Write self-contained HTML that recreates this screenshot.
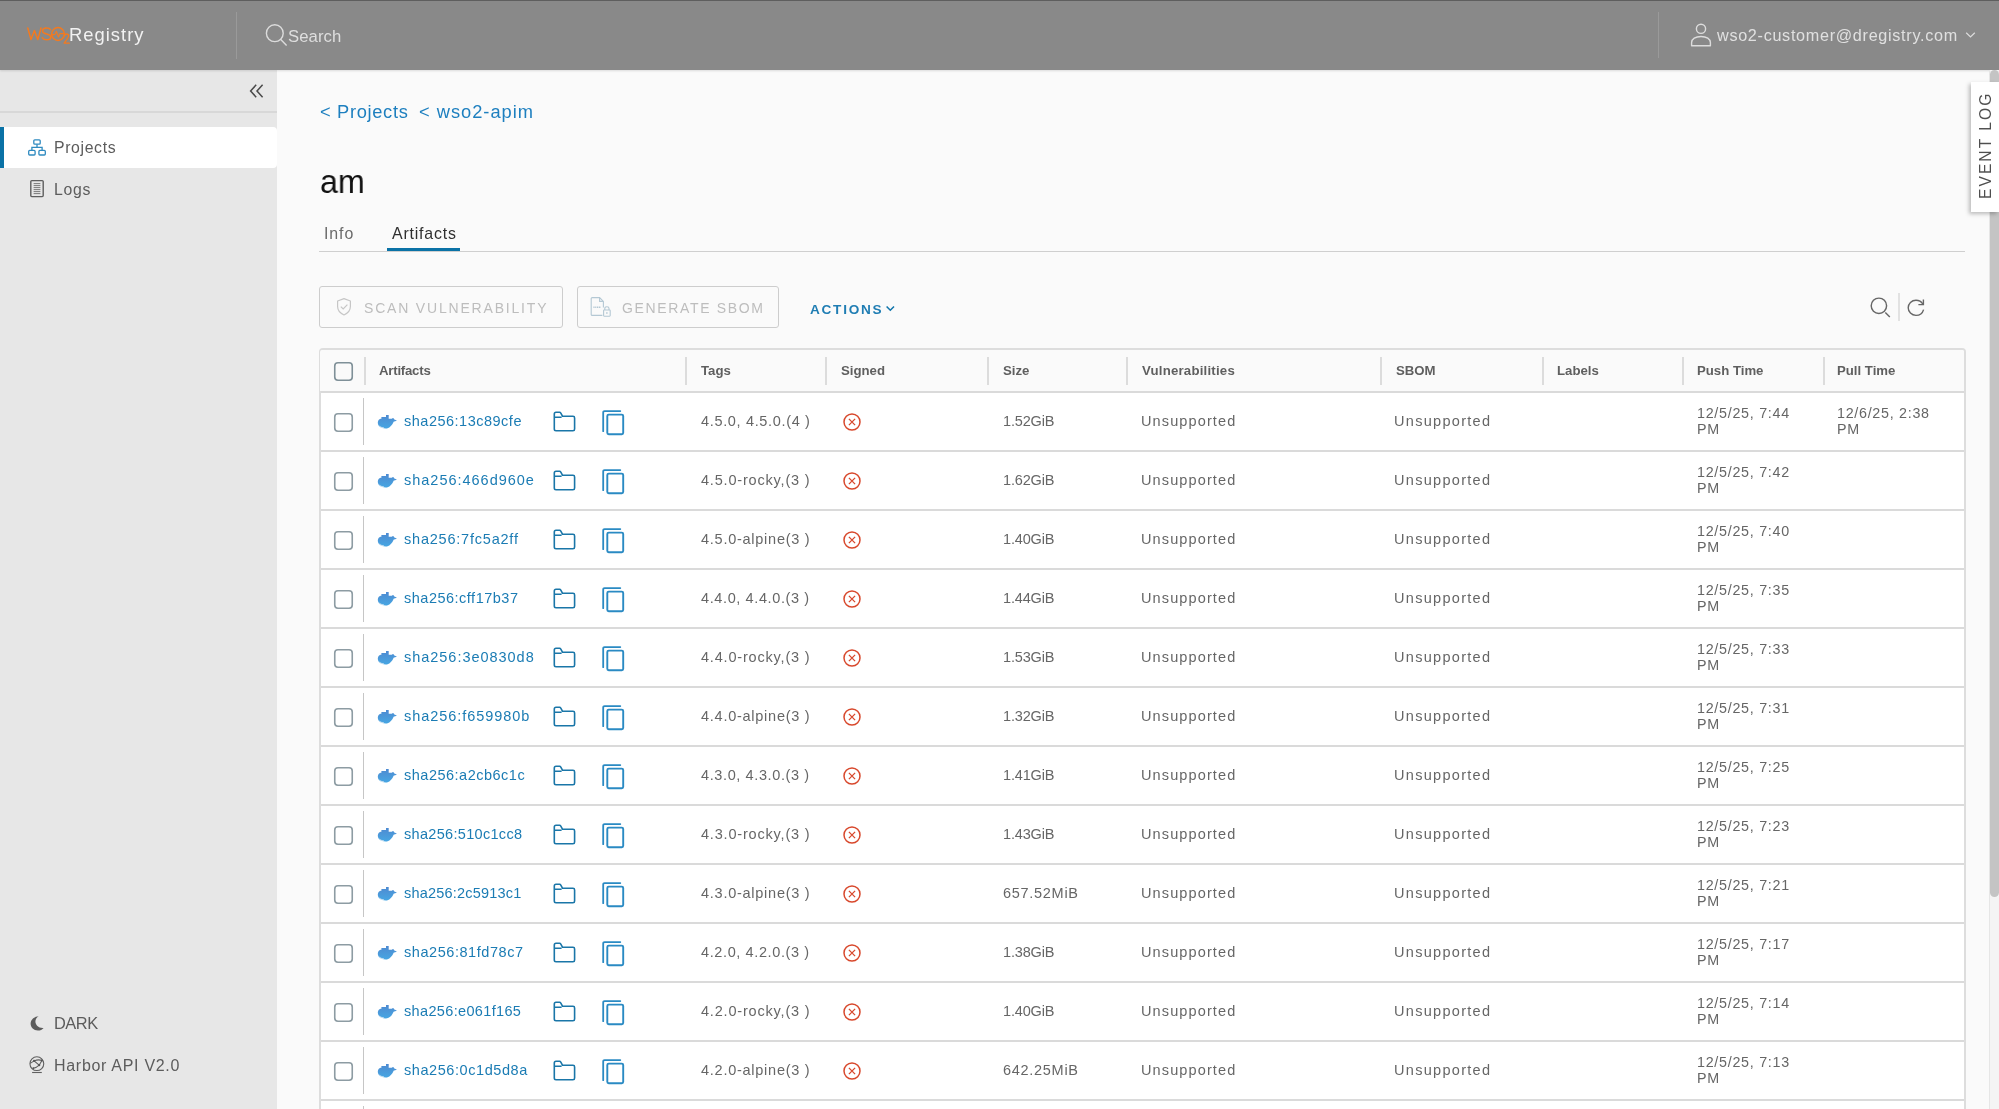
<!DOCTYPE html>
<html><head><meta charset="utf-8"><title>Harbor</title>
<style>
*{box-sizing:border-box;margin:0;padding:0}
html,body{width:1999px;height:1109px;overflow:hidden;background:#fafafa;font-family:"Liberation Sans",sans-serif;position:relative}
.abs{position:absolute}
.t,.tx{position:absolute;white-space:nowrap;line-height:1;will-change:transform}
#hdr{position:absolute;left:0;top:0;width:1999px;height:70px;background:#898989;border-top:1px solid #5e5e5e;box-shadow:0 1px 2px rgba(0,0,0,0.12)}
#side{position:absolute;left:0;top:70px;width:277px;height:1039px;background:#e7e7e7}
.hdiv{position:absolute;width:1px;background:#9a9a9a}
#sep1{position:absolute;left:0;top:111px;width:277px;height:2px;background:#d8d8d8}
#act{position:absolute;left:0;top:127px;width:277px;height:41px;background:#fff;border-radius:0 4px 4px 0}
#actbar{position:absolute;left:0;top:127px;width:4px;height:41px;background:#0a72a6}
.side-t{font-size:16px;color:#5c5c5c;left:53px}
.crumb{font-size:18px;color:#1d7fbf}
#title{font-size:34px;color:#111;left:319px}
.tab{font-size:16px}
#tabline{position:absolute;left:319px;top:251px;width:1646px;height:1px;background:#cfcfcf}
#tabul{position:absolute;left:387px;top:248px;width:73px;height:3px;background:#0a72a6}
.btn{position:absolute;top:286px;height:42px;border:1px solid #cdcdcd;border-radius:3px}
.btn-t{font-size:14px;color:#bdbdbd;letter-spacing:2.1px}
#actions{}
#tbl{position:absolute;left:319px;top:348px;width:1647px;height:800px;border:2px solid #dddddd;border-radius:4px;background:#fff}
#thead{position:absolute;left:320px;top:350px;width:1644px;height:41px;background:#fafafa;border-radius:2px 2px 0 0}
.hsep{position:absolute;top:357px;width:2px;height:28px;background:#dcdcdc}
.th{font-size:13px;font-weight:bold;color:#595959;top:364px}
.row{position:absolute;left:321px;width:1643px;height:59px;border-top:2px solid #dadada}
.row .cb{position:absolute;left:12px;top:19px}
.row .vsep{position:absolute;left:42px;top:5px;width:1px;height:47px;background:#c6c6c6}
.row .dk{position:absolute;left:56px;top:20px}
.row .fd{position:absolute;left:230px;top:17px}
.row .cp{position:absolute;left:279.5px;top:16px}
.row .xc{position:absolute;left:521px;top:19px}
.row .t{font-size:14px;color:#666;top:22px}
.row .lnk{color:#1b7cb4}
.row .t2{position:absolute;white-space:nowrap;font-size:14px;line-height:16px;color:#666;top:13px}
.c-art{left:83px}
.c-tag{left:380px}
.c-size{left:682px}
.c-vul{left:821px}
.c-sbom{left:1074px}
.c-push{left:1377px}
.c-pull{left:1517px}
#sb{position:absolute;left:1989px;top:70px;width:10px;height:1039px;background:#f4f4f4;border-left:1px solid #e6e6e6}
#thumb{position:absolute;left:1990px;top:70px;width:9px;height:827px;background:#c4c4c4;border-radius:5px}
#evt{position:absolute;left:1971px;top:82px;width:28px;height:130px;background:#fff;box-shadow:-2px 2px 4px rgba(0,0,0,.25)}
#evt-t{will-change:transform;position:absolute;left:1977.5px;top:199px;transform-origin:0 0;transform:rotate(-90deg);font-size:15.6px;letter-spacing:2.05px;color:#4f4f4f;line-height:1;white-space:nowrap}

</style></head>
<body>
<div id="side"></div>
<div id="hdr"></div>
<!-- logo -->
<svg class="abs" style="left:26px;top:25px" width="46" height="21" viewBox="0 0 46 21"><g stroke="#f47a1f" stroke-width="1.5" fill="none" stroke-linejoin="round" stroke-linecap="round"><path d="M1.8 3 L5 14.6 L8.4 5.5 L11.8 14.6 L15 3"/><path d="M24.5 4.6 C23.5 3.2 21.8 2.8 20.3 2.9 C18.2 3 16.6 4.2 16.6 6 C16.6 10 24.8 8.2 24.8 12 C24.8 13.8 23 14.8 20.8 14.8 C18.9 14.8 17.2 14 16.2 12.6"/><circle cx="32" cy="9" r="6.4"/><path d="M26.2 9.6 H29 L30.4 6.2 L32.4 12 L33.9 8.6 H37.6" stroke-width="1.1"/><path d="M38.3 11.2 C38.5 9.8 39.4 9 40.6 9 C41.8 9 42.7 9.8 42.7 11 C42.7 12.8 40 15 38.1 18.2 H43.3" stroke-width="1.3"/></g></svg>
<div class="hdiv" style="left:236px;top:12px;height:47px"></div>
<svg class="abs" style="left:264px;top:23px" width="25" height="25" viewBox="0 0 25 25"><circle cx="10.8" cy="10.2" r="8.4" stroke="#dcdcdc" stroke-width="1.4" fill="none"/><path d="M16.8 16.6 L22.6 22.4" stroke="#dcdcdc" stroke-width="1.4"/></svg>
<div class="hdiv" style="left:1658px;top:12px;height:46px"></div>
<svg class="abs" style="left:1690px;top:23px" width="23" height="25" viewBox="0 0 23 25"><circle cx="11" cy="5.8" r="4.6" stroke="#dcdcdc" stroke-width="1.4" fill="none"/><path d="M1.6 22.8 V19.6 C1.6 16 5.5 13.5 11 13.5 C16.5 13.5 20.4 16 20.4 19.6 V22.8 Z" stroke="#dcdcdc" stroke-width="1.4" fill="none" stroke-linejoin="round"/></svg>
<svg class="abs" style="left:1965px;top:31px" width="11" height="8" viewBox="0 0 11 8"><path d="M1.2 1.8 L5.5 6 L9.8 1.8" stroke="#dcdcdc" stroke-width="1.2" fill="none"/></svg>

<!-- sidebar -->
<svg class="abs" style="left:248px;top:82px" width="18" height="18" viewBox="0 0 18 18"><path d="M8.2 2.8 L2.6 9 L8.2 15.2 M14.6 2.8 L9 9 L14.6 15.2" stroke="#4a4a4a" stroke-width="1.5" fill="none"/></svg>
<div id="sep1"></div>
<div id="act"></div><div id="actbar"></div>
<svg class="abs" style="left:27px;top:138px" width="20" height="19" viewBox="0 0 20 19"><rect x="6.8" y="1.8" width="6.4" height="4.4" rx="1" stroke="#2e8ac0" stroke-width="1.3" fill="none"/><rect x="1.7" y="12.4" width="6.4" height="4.6" rx="1" stroke="#2e8ac0" stroke-width="1.3" fill="none"/><rect x="11.9" y="12.4" width="6.4" height="4.6" rx="1" stroke="#2e8ac0" stroke-width="1.3" fill="none"/><path d="M10 6.2 V9.4 M4.9 12.4 V9.4 H15.1 V12.4" stroke="#2e8ac0" stroke-width="1.3" fill="none"/></svg>
<svg class="abs" style="left:29px;top:179px" width="16" height="19" viewBox="0 0 16 19"><rect x="1.8" y="1.6" width="12.4" height="16" rx="1" stroke="#5e5e5e" stroke-width="1.4" fill="none"/><path d="M4.6 4.6 H11.4 M4.6 6.6 H11.4 M4.6 8.6 H11.4 M4.6 10.6 H11.4 M4.6 12.6 H11.4 M4.6 14.6 H11.4" stroke="#7a7a7a" stroke-width="1"/></svg>
<svg class="abs" style="left:29px;top:1015px" width="16" height="17" viewBox="0 0 16 17"><path d="M9.6 1.2 C5.2 1.6 1.6 4.6 1.6 8.6 C1.6 12.6 4.8 15.6 8.8 15.6 C11.2 15.6 13.4 14.6 14.6 13 C9.6 13.4 6.4 10 6.4 6.6 C6.4 4.4 7.6 2.4 9.6 1.2 Z" fill="#5c5c5c"/></svg>
<svg class="abs" style="left:28px;top:1055px" width="18" height="20" viewBox="0 0 18 20"><g stroke="#606060" stroke-width="1.1" fill="none"><circle cx="8.85" cy="8.65" r="6.9"/><path d="M2.2 8.4 L6.1 5.9 Q10 4.2 13.9 5.4 M6.1 5.9 L11.2 10.2 L13.9 5.4 M11.2 10.2 Q8.5 12.8 5.3 13.2"/><path d="M4.1 17.5 H13.8"/></g><g fill="#555"><circle cx="6.1" cy="5.9" r="1.1"/><circle cx="11.2" cy="10.2" r="1.1"/><circle cx="13.9" cy="5.4" r="1"/><circle cx="5.3" cy="13.2" r="1"/></g></svg>

<!-- main -->
<div id="tabline"></div><div id="tabul"></div>

<div class="btn" style="left:319px;width:244px"></div>
<svg class="abs" style="left:335px;top:297px" width="18" height="20" viewBox="0 0 18 20"><path d="M9 1.6 L15.4 4 V9.6 C15.4 13.4 12.6 16.4 9 18 C5.4 16.4 2.6 13.4 2.6 9.6 V4 Z" stroke="#c6c6c6" stroke-width="1.2" fill="none" stroke-linejoin="round"/><path d="M5.8 9.6 L8.2 12 L12.4 7.6" stroke="#c6c6c6" stroke-width="1.2" fill="none"/></svg>
<div class="btn" style="left:577px;width:202px"></div>
<svg class="abs" style="left:589px;top:296px" width="23" height="22" viewBox="0 0 23 22"><path d="M13.4 19.4 H3.2 Q2.2 19.4 2.2 18.4 V2.6 Q2.2 1.6 3.2 1.6 H10.6 L14.4 5.4 V11.4 M10.6 1.6 V5.4 H14.4" stroke="#b4c8d4" stroke-width="1.1" fill="none"/><path d="M4.4 11.2 H12" stroke="#b4c8d4" stroke-width="1.6" stroke-dasharray="1.2 0.6"/><rect x="14.6" y="14" width="6.6" height="6.2" rx="0.6" stroke="#b4c8d4" stroke-width="1.1" fill="none"/><path d="M15.8 14 V12.4 C15.8 10.2 20 10.2 20 12.4 V14 M17.9 16 V18" stroke="#b4c8d4" stroke-width="1.1" fill="none"/></svg>
<svg class="abs" style="left:885px;top:304px" width="11" height="9" viewBox="0 0 11 9"><path d="M1.6 2.4 L5.3 6.2 L9 2.4" stroke="#0f74aa" stroke-width="1.5" fill="none"/></svg>

<svg class="abs" style="left:1866px;top:294px" width="28" height="28" viewBox="0 0 28 28"><circle cx="12.9" cy="11.8" r="7.7" stroke="#666" stroke-width="1.45" fill="none"/><path d="M19.3 18.6 L23.8 23.1" stroke="#666" stroke-width="1.45"/></svg>
<div class="abs" style="left:1898px;top:293px;width:2px;height:28px;background:#e2e2e2"></div>
<svg class="abs" style="left:1904px;top:296px" width="24" height="24" viewBox="0 0 24 24"><path d="M19.6 13.6 C18.6 17 15.6 19.4 12 19.4 C7.6 19.4 4.2 15.8 4.2 11.8 C4.2 7.6 7.6 4.2 12 4.2 C15 4.2 17.4 5.6 18.8 8" stroke="#666" stroke-width="1.4" fill="none"/><path d="M19.4 3.6 V8.6 H14.4" stroke="#666" stroke-width="1.4" fill="none"/></svg>

<div id="tbl"></div>
<div id="thead"></div>
<svg class="abs" style="left:333px;top:361px" width="21" height="21" viewBox="0 0 21 21"><rect x="1.75" y="1.75" width="17.5" height="17.5" rx="3.2" stroke="#7f9098" stroke-width="1.6" fill="#fafafa"/></svg>
<div class="hsep" style="left:364px"></div>
<div class="hsep" style="left:685px"></div>
<div class="hsep" style="left:825px"></div>
<div class="hsep" style="left:987px"></div>
<div class="hsep" style="left:1126px"></div>
<div class="hsep" style="left:1380px"></div>
<div class="hsep" style="left:1542px"></div>
<div class="hsep" style="left:1682px"></div>
<div class="hsep" style="left:1823px"></div>
<div class="row" style="top:391.00px"><svg class="cb" width="21" height="21" viewBox="0 0 21 21"><rect x="1.75" y="1.75" width="17.5" height="17.5" rx="3.2" stroke="#8d9ca3" stroke-width="1.6" fill="#fff"/></svg><div class="vsep"></div><svg class="dk" width="21" height="17" viewBox="0 0 21 17"><defs><linearGradient id="dg" x1="0" y1="0" x2="0" y2="1"><stop offset="0" stop-color="#4d8ad2"/><stop offset="0.5" stop-color="#4b98d9"/><stop offset="1" stop-color="#46a6e3"/></linearGradient></defs><path d="M0.8 9.6 C0.9 7.6 2 6.2 3.6 5.8 H4.4 V3.9 H9 V2 H11.7 V5.8 H14.8 C15.2 5.2 15.6 5 16.1 5 C16.7 5.2 17.1 6 17.3 6.5 L19.9 7.5 C18.7 8.2 17.4 8.5 16.6 8.7 C15 12.6 12.2 15.5 8.7 15.5 C3.8 15.5 0.8 13.2 0.8 9.6 Z" fill="url(#dg)"/><path d="M2.6 13.2 C3.6 14.3 5 14.7 6.6 14.6" stroke="#e6eef6" stroke-width="1" fill="none"/></svg><svg class="fd" width="26" height="24" viewBox="0 0 26 24"><path d="M3.3 4 Q3.3 2.3 5 2.3 H8.6 Q9.3 2.3 9.8 3.1 L11.6 6.3 H22 Q23.6 6.3 23.6 7.9 V19 Q23.6 20.7 22 20.7 H5 Q3.3 20.7 3.3 19 Z M3.3 7.3 H10.6" stroke="#1a76a8" stroke-width="1.6" fill="none" stroke-linejoin="round"/></svg><svg class="cp" width="24" height="27" viewBox="0 0 24 27"><path d="M2.2 22.2 V3.6 Q2.2 2.1 3.6 2.1 H19.3" stroke="#2a8ac3" stroke-width="1.8" fill="none" stroke-linecap="round"/><rect x="6.3" y="5.6" width="15.9" height="19.6" rx="1.4" stroke="#2a8ac3" stroke-width="1.9" fill="none"/></svg><svg class="xc" width="20" height="20" viewBox="0 0 20 20"><circle cx="10" cy="10" r="8" stroke="#d8482c" stroke-width="1.5" fill="none"/><path d="M6.9 6.9 L13.1 13.1 M13.1 6.9 L6.9 13.1" stroke="#d8482c" stroke-width="1.3"/></svg></div>
<div class="t" id="r_art" style="left:403.50px;top:414.18px;font-size:14.5px;font-weight:400;color:#1b7cb4;letter-spacing:0.500px">sha256:13c89cfe</div>
<div class="t" id="r_tag" style="left:701.30px;top:414.18px;font-size:14.5px;font-weight:400;color:#666666;letter-spacing:0.662px">4.5.0, 4.5.0.(4 )</div>
<div class="t" id="r_size" style="left:1003.10px;top:414.18px;font-size:14.5px;font-weight:400;color:#666666;letter-spacing:-0.167px">1.52GiB</div>
<div class="t" id="r_vul" style="left:1140.70px;top:414.18px;font-size:14.5px;font-weight:400;color:#666666;letter-spacing:1.120px">Unsupported</div>
<div class="t" id="r_sbom" style="left:1393.50px;top:414.18px;font-size:14.5px;font-weight:400;color:#666666;letter-spacing:1.300px">Unsupported</div>
<div class="t" id="r_push" style="left:1696.90px;top:405.75px;font-size:14.3px;color:#666666;letter-spacing:0.725px;line-height:15.6px">12/5/25, 7:44<br>PM</div>
<div class="t" id="r_pull" style="left:1837.30px;top:405.75px;font-size:14.3px;color:#666666;letter-spacing:0.713px;line-height:15.6px">12/6/25, 2:38<br>PM</div>
<div class="row" style="top:450.00px"><svg class="cb" width="21" height="21" viewBox="0 0 21 21"><rect x="1.75" y="1.75" width="17.5" height="17.5" rx="3.2" stroke="#8d9ca3" stroke-width="1.6" fill="#fff"/></svg><div class="vsep"></div><svg class="dk" width="21" height="17" viewBox="0 0 21 17"><defs><linearGradient id="dg" x1="0" y1="0" x2="0" y2="1"><stop offset="0" stop-color="#4d8ad2"/><stop offset="0.5" stop-color="#4b98d9"/><stop offset="1" stop-color="#46a6e3"/></linearGradient></defs><path d="M0.8 9.6 C0.9 7.6 2 6.2 3.6 5.8 H4.4 V3.9 H9 V2 H11.7 V5.8 H14.8 C15.2 5.2 15.6 5 16.1 5 C16.7 5.2 17.1 6 17.3 6.5 L19.9 7.5 C18.7 8.2 17.4 8.5 16.6 8.7 C15 12.6 12.2 15.5 8.7 15.5 C3.8 15.5 0.8 13.2 0.8 9.6 Z" fill="url(#dg)"/><path d="M2.6 13.2 C3.6 14.3 5 14.7 6.6 14.6" stroke="#e6eef6" stroke-width="1" fill="none"/></svg><svg class="fd" width="26" height="24" viewBox="0 0 26 24"><path d="M3.3 4 Q3.3 2.3 5 2.3 H8.6 Q9.3 2.3 9.8 3.1 L11.6 6.3 H22 Q23.6 6.3 23.6 7.9 V19 Q23.6 20.7 22 20.7 H5 Q3.3 20.7 3.3 19 Z M3.3 7.3 H10.6" stroke="#1a76a8" stroke-width="1.6" fill="none" stroke-linejoin="round"/></svg><svg class="cp" width="24" height="27" viewBox="0 0 24 27"><path d="M2.2 22.2 V3.6 Q2.2 2.1 3.6 2.1 H19.3" stroke="#2a8ac3" stroke-width="1.8" fill="none" stroke-linecap="round"/><rect x="6.3" y="5.6" width="15.9" height="19.6" rx="1.4" stroke="#2a8ac3" stroke-width="1.9" fill="none"/></svg><svg class="xc" width="20" height="20" viewBox="0 0 20 20"><circle cx="10" cy="10" r="8" stroke="#d8482c" stroke-width="1.5" fill="none"/><path d="M6.9 6.9 L13.1 13.1 M13.1 6.9 L6.9 13.1" stroke="#d8482c" stroke-width="1.3"/></svg></div>
<div class="t" id="r_art_1" style="left:403.50px;top:473.18px;font-size:14.5px;font-weight:400;color:#1b7cb4;letter-spacing:0.986px">sha256:466d960e</div>
<div class="t" id="r_tag_1" style="left:701.30px;top:473.18px;font-size:14.5px;font-weight:400;color:#666666;letter-spacing:0.809px">4.5.0-rocky,(3 )</div>
<div class="t" id="r_size_1" style="left:1003.10px;top:473.18px;font-size:14.5px;font-weight:400;color:#666666;letter-spacing:-0.167px">1.62GiB</div>
<div class="t" id="r_vul_1" style="left:1140.70px;top:473.18px;font-size:14.5px;font-weight:400;color:#666666;letter-spacing:1.120px">Unsupported</div>
<div class="t" id="r_sbom_1" style="left:1393.50px;top:473.18px;font-size:14.5px;font-weight:400;color:#666666;letter-spacing:1.300px">Unsupported</div>
<div class="t" id="r_push_1" style="left:1696.90px;top:464.75px;font-size:14.3px;color:#666666;letter-spacing:0.725px;line-height:15.6px">12/5/25, 7:42<br>PM</div>
<div class="row" style="top:509.00px"><svg class="cb" width="21" height="21" viewBox="0 0 21 21"><rect x="1.75" y="1.75" width="17.5" height="17.5" rx="3.2" stroke="#8d9ca3" stroke-width="1.6" fill="#fff"/></svg><div class="vsep"></div><svg class="dk" width="21" height="17" viewBox="0 0 21 17"><defs><linearGradient id="dg" x1="0" y1="0" x2="0" y2="1"><stop offset="0" stop-color="#4d8ad2"/><stop offset="0.5" stop-color="#4b98d9"/><stop offset="1" stop-color="#46a6e3"/></linearGradient></defs><path d="M0.8 9.6 C0.9 7.6 2 6.2 3.6 5.8 H4.4 V3.9 H9 V2 H11.7 V5.8 H14.8 C15.2 5.2 15.6 5 16.1 5 C16.7 5.2 17.1 6 17.3 6.5 L19.9 7.5 C18.7 8.2 17.4 8.5 16.6 8.7 C15 12.6 12.2 15.5 8.7 15.5 C3.8 15.5 0.8 13.2 0.8 9.6 Z" fill="url(#dg)"/><path d="M2.6 13.2 C3.6 14.3 5 14.7 6.6 14.6" stroke="#e6eef6" stroke-width="1" fill="none"/></svg><svg class="fd" width="26" height="24" viewBox="0 0 26 24"><path d="M3.3 4 Q3.3 2.3 5 2.3 H8.6 Q9.3 2.3 9.8 3.1 L11.6 6.3 H22 Q23.6 6.3 23.6 7.9 V19 Q23.6 20.7 22 20.7 H5 Q3.3 20.7 3.3 19 Z M3.3 7.3 H10.6" stroke="#1a76a8" stroke-width="1.6" fill="none" stroke-linejoin="round"/></svg><svg class="cp" width="24" height="27" viewBox="0 0 24 27"><path d="M2.2 22.2 V3.6 Q2.2 2.1 3.6 2.1 H19.3" stroke="#2a8ac3" stroke-width="1.8" fill="none" stroke-linecap="round"/><rect x="6.3" y="5.6" width="15.9" height="19.6" rx="1.4" stroke="#2a8ac3" stroke-width="1.9" fill="none"/></svg><svg class="xc" width="20" height="20" viewBox="0 0 20 20"><circle cx="10" cy="10" r="8" stroke="#d8482c" stroke-width="1.5" fill="none"/><path d="M6.9 6.9 L13.1 13.1 M13.1 6.9 L6.9 13.1" stroke="#d8482c" stroke-width="1.3"/></svg></div>
<div class="t" id="r_art_2" style="left:403.50px;top:532.17px;font-size:14.5px;font-weight:400;color:#1b7cb4;letter-spacing:0.786px">sha256:7fc5a2ff</div>
<div class="t" id="r_tag_2" style="left:701.30px;top:532.17px;font-size:14.5px;font-weight:400;color:#666666;letter-spacing:0.742px">4.5.0-alpine(3 )</div>
<div class="t" id="r_size_2" style="left:1003.10px;top:532.17px;font-size:14.5px;font-weight:400;color:#666666;letter-spacing:-0.167px">1.40GiB</div>
<div class="t" id="r_vul_2" style="left:1140.70px;top:532.17px;font-size:14.5px;font-weight:400;color:#666666;letter-spacing:1.120px">Unsupported</div>
<div class="t" id="r_sbom_2" style="left:1393.50px;top:532.17px;font-size:14.5px;font-weight:400;color:#666666;letter-spacing:1.300px">Unsupported</div>
<div class="t" id="r_push_2" style="left:1696.90px;top:523.75px;font-size:14.3px;color:#666666;letter-spacing:0.725px;line-height:15.6px">12/5/25, 7:40<br>PM</div>
<div class="row" style="top:568.00px"><svg class="cb" width="21" height="21" viewBox="0 0 21 21"><rect x="1.75" y="1.75" width="17.5" height="17.5" rx="3.2" stroke="#8d9ca3" stroke-width="1.6" fill="#fff"/></svg><div class="vsep"></div><svg class="dk" width="21" height="17" viewBox="0 0 21 17"><defs><linearGradient id="dg" x1="0" y1="0" x2="0" y2="1"><stop offset="0" stop-color="#4d8ad2"/><stop offset="0.5" stop-color="#4b98d9"/><stop offset="1" stop-color="#46a6e3"/></linearGradient></defs><path d="M0.8 9.6 C0.9 7.6 2 6.2 3.6 5.8 H4.4 V3.9 H9 V2 H11.7 V5.8 H14.8 C15.2 5.2 15.6 5 16.1 5 C16.7 5.2 17.1 6 17.3 6.5 L19.9 7.5 C18.7 8.2 17.4 8.5 16.6 8.7 C15 12.6 12.2 15.5 8.7 15.5 C3.8 15.5 0.8 13.2 0.8 9.6 Z" fill="url(#dg)"/><path d="M2.6 13.2 C3.6 14.3 5 14.7 6.6 14.6" stroke="#e6eef6" stroke-width="1" fill="none"/></svg><svg class="fd" width="26" height="24" viewBox="0 0 26 24"><path d="M3.3 4 Q3.3 2.3 5 2.3 H8.6 Q9.3 2.3 9.8 3.1 L11.6 6.3 H22 Q23.6 6.3 23.6 7.9 V19 Q23.6 20.7 22 20.7 H5 Q3.3 20.7 3.3 19 Z M3.3 7.3 H10.6" stroke="#1a76a8" stroke-width="1.6" fill="none" stroke-linejoin="round"/></svg><svg class="cp" width="24" height="27" viewBox="0 0 24 27"><path d="M2.2 22.2 V3.6 Q2.2 2.1 3.6 2.1 H19.3" stroke="#2a8ac3" stroke-width="1.8" fill="none" stroke-linecap="round"/><rect x="6.3" y="5.6" width="15.9" height="19.6" rx="1.4" stroke="#2a8ac3" stroke-width="1.9" fill="none"/></svg><svg class="xc" width="20" height="20" viewBox="0 0 20 20"><circle cx="10" cy="10" r="8" stroke="#d8482c" stroke-width="1.5" fill="none"/><path d="M6.9 6.9 L13.1 13.1 M13.1 6.9 L6.9 13.1" stroke="#d8482c" stroke-width="1.3"/></svg></div>
<div class="t" id="r_art_3" style="left:403.50px;top:591.17px;font-size:14.5px;font-weight:400;color:#1b7cb4;letter-spacing:0.500px">sha256:cff17b37</div>
<div class="t" id="r_tag_3" style="left:701.30px;top:591.17px;font-size:14.5px;font-weight:400;color:#666666;letter-spacing:0.612px">4.4.0, 4.4.0.(3 )</div>
<div class="t" id="r_size_3" style="left:1003.10px;top:591.17px;font-size:14.5px;font-weight:400;color:#666666;letter-spacing:-0.167px">1.44GiB</div>
<div class="t" id="r_vul_3" style="left:1140.70px;top:591.17px;font-size:14.5px;font-weight:400;color:#666666;letter-spacing:1.120px">Unsupported</div>
<div class="t" id="r_sbom_3" style="left:1393.50px;top:591.17px;font-size:14.5px;font-weight:400;color:#666666;letter-spacing:1.300px">Unsupported</div>
<div class="t" id="r_push_3" style="left:1696.90px;top:582.75px;font-size:14.3px;color:#666666;letter-spacing:0.725px;line-height:15.6px">12/5/25, 7:35<br>PM</div>
<div class="row" style="top:627.00px"><svg class="cb" width="21" height="21" viewBox="0 0 21 21"><rect x="1.75" y="1.75" width="17.5" height="17.5" rx="3.2" stroke="#8d9ca3" stroke-width="1.6" fill="#fff"/></svg><div class="vsep"></div><svg class="dk" width="21" height="17" viewBox="0 0 21 17"><defs><linearGradient id="dg" x1="0" y1="0" x2="0" y2="1"><stop offset="0" stop-color="#4d8ad2"/><stop offset="0.5" stop-color="#4b98d9"/><stop offset="1" stop-color="#46a6e3"/></linearGradient></defs><path d="M0.8 9.6 C0.9 7.6 2 6.2 3.6 5.8 H4.4 V3.9 H9 V2 H11.7 V5.8 H14.8 C15.2 5.2 15.6 5 16.1 5 C16.7 5.2 17.1 6 17.3 6.5 L19.9 7.5 C18.7 8.2 17.4 8.5 16.6 8.7 C15 12.6 12.2 15.5 8.7 15.5 C3.8 15.5 0.8 13.2 0.8 9.6 Z" fill="url(#dg)"/><path d="M2.6 13.2 C3.6 14.3 5 14.7 6.6 14.6" stroke="#e6eef6" stroke-width="1" fill="none"/></svg><svg class="fd" width="26" height="24" viewBox="0 0 26 24"><path d="M3.3 4 Q3.3 2.3 5 2.3 H8.6 Q9.3 2.3 9.8 3.1 L11.6 6.3 H22 Q23.6 6.3 23.6 7.9 V19 Q23.6 20.7 22 20.7 H5 Q3.3 20.7 3.3 19 Z M3.3 7.3 H10.6" stroke="#1a76a8" stroke-width="1.6" fill="none" stroke-linejoin="round"/></svg><svg class="cp" width="24" height="27" viewBox="0 0 24 27"><path d="M2.2 22.2 V3.6 Q2.2 2.1 3.6 2.1 H19.3" stroke="#2a8ac3" stroke-width="1.8" fill="none" stroke-linecap="round"/><rect x="6.3" y="5.6" width="15.9" height="19.6" rx="1.4" stroke="#2a8ac3" stroke-width="1.9" fill="none"/></svg><svg class="xc" width="20" height="20" viewBox="0 0 20 20"><circle cx="10" cy="10" r="8" stroke="#d8482c" stroke-width="1.5" fill="none"/><path d="M6.9 6.9 L13.1 13.1 M13.1 6.9 L6.9 13.1" stroke="#d8482c" stroke-width="1.3"/></svg></div>
<div class="t" id="r_art_4" style="left:403.50px;top:650.17px;font-size:14.5px;font-weight:400;color:#1b7cb4;letter-spacing:0.971px">sha256:3e0830d8</div>
<div class="t" id="r_tag_4" style="left:701.30px;top:650.17px;font-size:14.5px;font-weight:400;color:#666666;letter-spacing:0.809px">4.4.0-rocky,(3 )</div>
<div class="t" id="r_size_4" style="left:1003.10px;top:650.17px;font-size:14.5px;font-weight:400;color:#666666;letter-spacing:-0.167px">1.53GiB</div>
<div class="t" id="r_vul_4" style="left:1140.70px;top:650.17px;font-size:14.5px;font-weight:400;color:#666666;letter-spacing:1.120px">Unsupported</div>
<div class="t" id="r_sbom_4" style="left:1393.50px;top:650.17px;font-size:14.5px;font-weight:400;color:#666666;letter-spacing:1.300px">Unsupported</div>
<div class="t" id="r_push_4" style="left:1696.90px;top:641.75px;font-size:14.3px;color:#666666;letter-spacing:0.725px;line-height:15.6px">12/5/25, 7:33<br>PM</div>
<div class="row" style="top:686.00px"><svg class="cb" width="21" height="21" viewBox="0 0 21 21"><rect x="1.75" y="1.75" width="17.5" height="17.5" rx="3.2" stroke="#8d9ca3" stroke-width="1.6" fill="#fff"/></svg><div class="vsep"></div><svg class="dk" width="21" height="17" viewBox="0 0 21 17"><defs><linearGradient id="dg" x1="0" y1="0" x2="0" y2="1"><stop offset="0" stop-color="#4d8ad2"/><stop offset="0.5" stop-color="#4b98d9"/><stop offset="1" stop-color="#46a6e3"/></linearGradient></defs><path d="M0.8 9.6 C0.9 7.6 2 6.2 3.6 5.8 H4.4 V3.9 H9 V2 H11.7 V5.8 H14.8 C15.2 5.2 15.6 5 16.1 5 C16.7 5.2 17.1 6 17.3 6.5 L19.9 7.5 C18.7 8.2 17.4 8.5 16.6 8.7 C15 12.6 12.2 15.5 8.7 15.5 C3.8 15.5 0.8 13.2 0.8 9.6 Z" fill="url(#dg)"/><path d="M2.6 13.2 C3.6 14.3 5 14.7 6.6 14.6" stroke="#e6eef6" stroke-width="1" fill="none"/></svg><svg class="fd" width="26" height="24" viewBox="0 0 26 24"><path d="M3.3 4 Q3.3 2.3 5 2.3 H8.6 Q9.3 2.3 9.8 3.1 L11.6 6.3 H22 Q23.6 6.3 23.6 7.9 V19 Q23.6 20.7 22 20.7 H5 Q3.3 20.7 3.3 19 Z M3.3 7.3 H10.6" stroke="#1a76a8" stroke-width="1.6" fill="none" stroke-linejoin="round"/></svg><svg class="cp" width="24" height="27" viewBox="0 0 24 27"><path d="M2.2 22.2 V3.6 Q2.2 2.1 3.6 2.1 H19.3" stroke="#2a8ac3" stroke-width="1.8" fill="none" stroke-linecap="round"/><rect x="6.3" y="5.6" width="15.9" height="19.6" rx="1.4" stroke="#2a8ac3" stroke-width="1.9" fill="none"/></svg><svg class="xc" width="20" height="20" viewBox="0 0 20 20"><circle cx="10" cy="10" r="8" stroke="#d8482c" stroke-width="1.5" fill="none"/><path d="M6.9 6.9 L13.1 13.1 M13.1 6.9 L6.9 13.1" stroke="#d8482c" stroke-width="1.3"/></svg></div>
<div class="t" id="r_art_5" style="left:403.50px;top:709.17px;font-size:14.5px;font-weight:400;color:#1b7cb4;letter-spacing:0.943px">sha256:f659980b</div>
<div class="t" id="r_tag_5" style="left:701.30px;top:709.17px;font-size:14.5px;font-weight:400;color:#666666;letter-spacing:0.742px">4.4.0-alpine(3 )</div>
<div class="t" id="r_size_5" style="left:1003.10px;top:709.17px;font-size:14.5px;font-weight:400;color:#666666;letter-spacing:-0.167px">1.32GiB</div>
<div class="t" id="r_vul_5" style="left:1140.70px;top:709.17px;font-size:14.5px;font-weight:400;color:#666666;letter-spacing:1.120px">Unsupported</div>
<div class="t" id="r_sbom_5" style="left:1393.50px;top:709.17px;font-size:14.5px;font-weight:400;color:#666666;letter-spacing:1.300px">Unsupported</div>
<div class="t" id="r_push_5" style="left:1696.90px;top:700.75px;font-size:14.3px;color:#666666;letter-spacing:0.725px;line-height:15.6px">12/5/25, 7:31<br>PM</div>
<div class="row" style="top:745.00px"><svg class="cb" width="21" height="21" viewBox="0 0 21 21"><rect x="1.75" y="1.75" width="17.5" height="17.5" rx="3.2" stroke="#8d9ca3" stroke-width="1.6" fill="#fff"/></svg><div class="vsep"></div><svg class="dk" width="21" height="17" viewBox="0 0 21 17"><defs><linearGradient id="dg" x1="0" y1="0" x2="0" y2="1"><stop offset="0" stop-color="#4d8ad2"/><stop offset="0.5" stop-color="#4b98d9"/><stop offset="1" stop-color="#46a6e3"/></linearGradient></defs><path d="M0.8 9.6 C0.9 7.6 2 6.2 3.6 5.8 H4.4 V3.9 H9 V2 H11.7 V5.8 H14.8 C15.2 5.2 15.6 5 16.1 5 C16.7 5.2 17.1 6 17.3 6.5 L19.9 7.5 C18.7 8.2 17.4 8.5 16.6 8.7 C15 12.6 12.2 15.5 8.7 15.5 C3.8 15.5 0.8 13.2 0.8 9.6 Z" fill="url(#dg)"/><path d="M2.6 13.2 C3.6 14.3 5 14.7 6.6 14.6" stroke="#e6eef6" stroke-width="1" fill="none"/></svg><svg class="fd" width="26" height="24" viewBox="0 0 26 24"><path d="M3.3 4 Q3.3 2.3 5 2.3 H8.6 Q9.3 2.3 9.8 3.1 L11.6 6.3 H22 Q23.6 6.3 23.6 7.9 V19 Q23.6 20.7 22 20.7 H5 Q3.3 20.7 3.3 19 Z M3.3 7.3 H10.6" stroke="#1a76a8" stroke-width="1.6" fill="none" stroke-linejoin="round"/></svg><svg class="cp" width="24" height="27" viewBox="0 0 24 27"><path d="M2.2 22.2 V3.6 Q2.2 2.1 3.6 2.1 H19.3" stroke="#2a8ac3" stroke-width="1.8" fill="none" stroke-linecap="round"/><rect x="6.3" y="5.6" width="15.9" height="19.6" rx="1.4" stroke="#2a8ac3" stroke-width="1.9" fill="none"/></svg><svg class="xc" width="20" height="20" viewBox="0 0 20 20"><circle cx="10" cy="10" r="8" stroke="#d8482c" stroke-width="1.5" fill="none"/><path d="M6.9 6.9 L13.1 13.1 M13.1 6.9 L6.9 13.1" stroke="#d8482c" stroke-width="1.3"/></svg></div>
<div class="t" id="r_art_6" style="left:403.50px;top:768.17px;font-size:14.5px;font-weight:400;color:#1b7cb4;letter-spacing:0.500px">sha256:a2cb6c1c</div>
<div class="t" id="r_tag_6" style="left:701.30px;top:768.17px;font-size:14.5px;font-weight:400;color:#666666;letter-spacing:0.612px">4.3.0, 4.3.0.(3 )</div>
<div class="t" id="r_size_6" style="left:1003.10px;top:768.17px;font-size:14.5px;font-weight:400;color:#666666;letter-spacing:-0.167px">1.41GiB</div>
<div class="t" id="r_vul_6" style="left:1140.70px;top:768.17px;font-size:14.5px;font-weight:400;color:#666666;letter-spacing:1.120px">Unsupported</div>
<div class="t" id="r_sbom_6" style="left:1393.50px;top:768.17px;font-size:14.5px;font-weight:400;color:#666666;letter-spacing:1.300px">Unsupported</div>
<div class="t" id="r_push_6" style="left:1696.90px;top:759.75px;font-size:14.3px;color:#666666;letter-spacing:0.725px;line-height:15.6px">12/5/25, 7:25<br>PM</div>
<div class="row" style="top:804.00px"><svg class="cb" width="21" height="21" viewBox="0 0 21 21"><rect x="1.75" y="1.75" width="17.5" height="17.5" rx="3.2" stroke="#8d9ca3" stroke-width="1.6" fill="#fff"/></svg><div class="vsep"></div><svg class="dk" width="21" height="17" viewBox="0 0 21 17"><defs><linearGradient id="dg" x1="0" y1="0" x2="0" y2="1"><stop offset="0" stop-color="#4d8ad2"/><stop offset="0.5" stop-color="#4b98d9"/><stop offset="1" stop-color="#46a6e3"/></linearGradient></defs><path d="M0.8 9.6 C0.9 7.6 2 6.2 3.6 5.8 H4.4 V3.9 H9 V2 H11.7 V5.8 H14.8 C15.2 5.2 15.6 5 16.1 5 C16.7 5.2 17.1 6 17.3 6.5 L19.9 7.5 C18.7 8.2 17.4 8.5 16.6 8.7 C15 12.6 12.2 15.5 8.7 15.5 C3.8 15.5 0.8 13.2 0.8 9.6 Z" fill="url(#dg)"/><path d="M2.6 13.2 C3.6 14.3 5 14.7 6.6 14.6" stroke="#e6eef6" stroke-width="1" fill="none"/></svg><svg class="fd" width="26" height="24" viewBox="0 0 26 24"><path d="M3.3 4 Q3.3 2.3 5 2.3 H8.6 Q9.3 2.3 9.8 3.1 L11.6 6.3 H22 Q23.6 6.3 23.6 7.9 V19 Q23.6 20.7 22 20.7 H5 Q3.3 20.7 3.3 19 Z M3.3 7.3 H10.6" stroke="#1a76a8" stroke-width="1.6" fill="none" stroke-linejoin="round"/></svg><svg class="cp" width="24" height="27" viewBox="0 0 24 27"><path d="M2.2 22.2 V3.6 Q2.2 2.1 3.6 2.1 H19.3" stroke="#2a8ac3" stroke-width="1.8" fill="none" stroke-linecap="round"/><rect x="6.3" y="5.6" width="15.9" height="19.6" rx="1.4" stroke="#2a8ac3" stroke-width="1.9" fill="none"/></svg><svg class="xc" width="20" height="20" viewBox="0 0 20 20"><circle cx="10" cy="10" r="8" stroke="#d8482c" stroke-width="1.5" fill="none"/><path d="M6.9 6.9 L13.1 13.1 M13.1 6.9 L6.9 13.1" stroke="#d8482c" stroke-width="1.3"/></svg></div>
<div class="t" id="r_art_7" style="left:403.50px;top:827.17px;font-size:14.5px;font-weight:400;color:#1b7cb4;letter-spacing:0.314px">sha256:510c1cc8</div>
<div class="t" id="r_tag_7" style="left:701.30px;top:827.17px;font-size:14.5px;font-weight:400;color:#666666;letter-spacing:0.809px">4.3.0-rocky,(3 )</div>
<div class="t" id="r_size_7" style="left:1003.10px;top:827.17px;font-size:14.5px;font-weight:400;color:#666666;letter-spacing:-0.167px">1.43GiB</div>
<div class="t" id="r_vul_7" style="left:1140.70px;top:827.17px;font-size:14.5px;font-weight:400;color:#666666;letter-spacing:1.120px">Unsupported</div>
<div class="t" id="r_sbom_7" style="left:1393.50px;top:827.17px;font-size:14.5px;font-weight:400;color:#666666;letter-spacing:1.300px">Unsupported</div>
<div class="t" id="r_push_7" style="left:1696.90px;top:818.75px;font-size:14.3px;color:#666666;letter-spacing:0.725px;line-height:15.6px">12/5/25, 7:23<br>PM</div>
<div class="row" style="top:863.00px"><svg class="cb" width="21" height="21" viewBox="0 0 21 21"><rect x="1.75" y="1.75" width="17.5" height="17.5" rx="3.2" stroke="#8d9ca3" stroke-width="1.6" fill="#fff"/></svg><div class="vsep"></div><svg class="dk" width="21" height="17" viewBox="0 0 21 17"><defs><linearGradient id="dg" x1="0" y1="0" x2="0" y2="1"><stop offset="0" stop-color="#4d8ad2"/><stop offset="0.5" stop-color="#4b98d9"/><stop offset="1" stop-color="#46a6e3"/></linearGradient></defs><path d="M0.8 9.6 C0.9 7.6 2 6.2 3.6 5.8 H4.4 V3.9 H9 V2 H11.7 V5.8 H14.8 C15.2 5.2 15.6 5 16.1 5 C16.7 5.2 17.1 6 17.3 6.5 L19.9 7.5 C18.7 8.2 17.4 8.5 16.6 8.7 C15 12.6 12.2 15.5 8.7 15.5 C3.8 15.5 0.8 13.2 0.8 9.6 Z" fill="url(#dg)"/><path d="M2.6 13.2 C3.6 14.3 5 14.7 6.6 14.6" stroke="#e6eef6" stroke-width="1" fill="none"/></svg><svg class="fd" width="26" height="24" viewBox="0 0 26 24"><path d="M3.3 4 Q3.3 2.3 5 2.3 H8.6 Q9.3 2.3 9.8 3.1 L11.6 6.3 H22 Q23.6 6.3 23.6 7.9 V19 Q23.6 20.7 22 20.7 H5 Q3.3 20.7 3.3 19 Z M3.3 7.3 H10.6" stroke="#1a76a8" stroke-width="1.6" fill="none" stroke-linejoin="round"/></svg><svg class="cp" width="24" height="27" viewBox="0 0 24 27"><path d="M2.2 22.2 V3.6 Q2.2 2.1 3.6 2.1 H19.3" stroke="#2a8ac3" stroke-width="1.8" fill="none" stroke-linecap="round"/><rect x="6.3" y="5.6" width="15.9" height="19.6" rx="1.4" stroke="#2a8ac3" stroke-width="1.9" fill="none"/></svg><svg class="xc" width="20" height="20" viewBox="0 0 20 20"><circle cx="10" cy="10" r="8" stroke="#d8482c" stroke-width="1.5" fill="none"/><path d="M6.9 6.9 L13.1 13.1 M13.1 6.9 L6.9 13.1" stroke="#d8482c" stroke-width="1.3"/></svg></div>
<div class="t" id="r_art_8" style="left:403.50px;top:886.17px;font-size:14.5px;font-weight:400;color:#1b7cb4;letter-spacing:0.200px">sha256:2c5913c1</div>
<div class="t" id="r_tag_8" style="left:701.30px;top:886.17px;font-size:14.5px;font-weight:400;color:#666666;letter-spacing:0.742px">4.3.0-alpine(3 )</div>
<div class="t" id="r_size_8" style="left:1003.10px;top:886.17px;font-size:14.5px;font-weight:400;color:#666666;letter-spacing:0.708px">657.52MiB</div>
<div class="t" id="r_vul_8" style="left:1140.70px;top:886.17px;font-size:14.5px;font-weight:400;color:#666666;letter-spacing:1.120px">Unsupported</div>
<div class="t" id="r_sbom_8" style="left:1393.50px;top:886.17px;font-size:14.5px;font-weight:400;color:#666666;letter-spacing:1.300px">Unsupported</div>
<div class="t" id="r_push_8" style="left:1696.90px;top:877.75px;font-size:14.3px;color:#666666;letter-spacing:0.725px;line-height:15.6px">12/5/25, 7:21<br>PM</div>
<div class="row" style="top:922.00px"><svg class="cb" width="21" height="21" viewBox="0 0 21 21"><rect x="1.75" y="1.75" width="17.5" height="17.5" rx="3.2" stroke="#8d9ca3" stroke-width="1.6" fill="#fff"/></svg><div class="vsep"></div><svg class="dk" width="21" height="17" viewBox="0 0 21 17"><defs><linearGradient id="dg" x1="0" y1="0" x2="0" y2="1"><stop offset="0" stop-color="#4d8ad2"/><stop offset="0.5" stop-color="#4b98d9"/><stop offset="1" stop-color="#46a6e3"/></linearGradient></defs><path d="M0.8 9.6 C0.9 7.6 2 6.2 3.6 5.8 H4.4 V3.9 H9 V2 H11.7 V5.8 H14.8 C15.2 5.2 15.6 5 16.1 5 C16.7 5.2 17.1 6 17.3 6.5 L19.9 7.5 C18.7 8.2 17.4 8.5 16.6 8.7 C15 12.6 12.2 15.5 8.7 15.5 C3.8 15.5 0.8 13.2 0.8 9.6 Z" fill="url(#dg)"/><path d="M2.6 13.2 C3.6 14.3 5 14.7 6.6 14.6" stroke="#e6eef6" stroke-width="1" fill="none"/></svg><svg class="fd" width="26" height="24" viewBox="0 0 26 24"><path d="M3.3 4 Q3.3 2.3 5 2.3 H8.6 Q9.3 2.3 9.8 3.1 L11.6 6.3 H22 Q23.6 6.3 23.6 7.9 V19 Q23.6 20.7 22 20.7 H5 Q3.3 20.7 3.3 19 Z M3.3 7.3 H10.6" stroke="#1a76a8" stroke-width="1.6" fill="none" stroke-linejoin="round"/></svg><svg class="cp" width="24" height="27" viewBox="0 0 24 27"><path d="M2.2 22.2 V3.6 Q2.2 2.1 3.6 2.1 H19.3" stroke="#2a8ac3" stroke-width="1.8" fill="none" stroke-linecap="round"/><rect x="6.3" y="5.6" width="15.9" height="19.6" rx="1.4" stroke="#2a8ac3" stroke-width="1.9" fill="none"/></svg><svg class="xc" width="20" height="20" viewBox="0 0 20 20"><circle cx="10" cy="10" r="8" stroke="#d8482c" stroke-width="1.5" fill="none"/><path d="M6.9 6.9 L13.1 13.1 M13.1 6.9 L6.9 13.1" stroke="#d8482c" stroke-width="1.3"/></svg></div>
<div class="t" id="r_art_9" style="left:403.50px;top:945.17px;font-size:14.5px;font-weight:400;color:#1b7cb4;letter-spacing:0.557px">sha256:81fd78c7</div>
<div class="t" id="r_tag_9" style="left:701.30px;top:945.17px;font-size:14.5px;font-weight:400;color:#666666;letter-spacing:0.612px">4.2.0, 4.2.0.(3 )</div>
<div class="t" id="r_size_9" style="left:1003.10px;top:945.17px;font-size:14.5px;font-weight:400;color:#666666;letter-spacing:-0.167px">1.38GiB</div>
<div class="t" id="r_vul_9" style="left:1140.70px;top:945.17px;font-size:14.5px;font-weight:400;color:#666666;letter-spacing:1.120px">Unsupported</div>
<div class="t" id="r_sbom_9" style="left:1393.50px;top:945.17px;font-size:14.5px;font-weight:400;color:#666666;letter-spacing:1.300px">Unsupported</div>
<div class="t" id="r_push_9" style="left:1696.90px;top:936.75px;font-size:14.3px;color:#666666;letter-spacing:0.725px;line-height:15.6px">12/5/25, 7:17<br>PM</div>
<div class="row" style="top:981.00px"><svg class="cb" width="21" height="21" viewBox="0 0 21 21"><rect x="1.75" y="1.75" width="17.5" height="17.5" rx="3.2" stroke="#8d9ca3" stroke-width="1.6" fill="#fff"/></svg><div class="vsep"></div><svg class="dk" width="21" height="17" viewBox="0 0 21 17"><defs><linearGradient id="dg" x1="0" y1="0" x2="0" y2="1"><stop offset="0" stop-color="#4d8ad2"/><stop offset="0.5" stop-color="#4b98d9"/><stop offset="1" stop-color="#46a6e3"/></linearGradient></defs><path d="M0.8 9.6 C0.9 7.6 2 6.2 3.6 5.8 H4.4 V3.9 H9 V2 H11.7 V5.8 H14.8 C15.2 5.2 15.6 5 16.1 5 C16.7 5.2 17.1 6 17.3 6.5 L19.9 7.5 C18.7 8.2 17.4 8.5 16.6 8.7 C15 12.6 12.2 15.5 8.7 15.5 C3.8 15.5 0.8 13.2 0.8 9.6 Z" fill="url(#dg)"/><path d="M2.6 13.2 C3.6 14.3 5 14.7 6.6 14.6" stroke="#e6eef6" stroke-width="1" fill="none"/></svg><svg class="fd" width="26" height="24" viewBox="0 0 26 24"><path d="M3.3 4 Q3.3 2.3 5 2.3 H8.6 Q9.3 2.3 9.8 3.1 L11.6 6.3 H22 Q23.6 6.3 23.6 7.9 V19 Q23.6 20.7 22 20.7 H5 Q3.3 20.7 3.3 19 Z M3.3 7.3 H10.6" stroke="#1a76a8" stroke-width="1.6" fill="none" stroke-linejoin="round"/></svg><svg class="cp" width="24" height="27" viewBox="0 0 24 27"><path d="M2.2 22.2 V3.6 Q2.2 2.1 3.6 2.1 H19.3" stroke="#2a8ac3" stroke-width="1.8" fill="none" stroke-linecap="round"/><rect x="6.3" y="5.6" width="15.9" height="19.6" rx="1.4" stroke="#2a8ac3" stroke-width="1.9" fill="none"/></svg><svg class="xc" width="20" height="20" viewBox="0 0 20 20"><circle cx="10" cy="10" r="8" stroke="#d8482c" stroke-width="1.5" fill="none"/><path d="M6.9 6.9 L13.1 13.1 M13.1 6.9 L6.9 13.1" stroke="#d8482c" stroke-width="1.3"/></svg></div>
<div class="t" id="r_art_10" style="left:403.50px;top:1004.17px;font-size:14.5px;font-weight:400;color:#1b7cb4;letter-spacing:0.343px">sha256:e061f165</div>
<div class="t" id="r_tag_10" style="left:701.30px;top:1004.17px;font-size:14.5px;font-weight:400;color:#666666;letter-spacing:0.809px">4.2.0-rocky,(3 )</div>
<div class="t" id="r_size_10" style="left:1003.10px;top:1004.17px;font-size:14.5px;font-weight:400;color:#666666;letter-spacing:-0.167px">1.40GiB</div>
<div class="t" id="r_vul_10" style="left:1140.70px;top:1004.17px;font-size:14.5px;font-weight:400;color:#666666;letter-spacing:1.120px">Unsupported</div>
<div class="t" id="r_sbom_10" style="left:1393.50px;top:1004.17px;font-size:14.5px;font-weight:400;color:#666666;letter-spacing:1.300px">Unsupported</div>
<div class="t" id="r_push_10" style="left:1696.90px;top:995.75px;font-size:14.3px;color:#666666;letter-spacing:0.725px;line-height:15.6px">12/5/25, 7:14<br>PM</div>
<div class="row" style="top:1040.00px"><svg class="cb" width="21" height="21" viewBox="0 0 21 21"><rect x="1.75" y="1.75" width="17.5" height="17.5" rx="3.2" stroke="#8d9ca3" stroke-width="1.6" fill="#fff"/></svg><div class="vsep"></div><svg class="dk" width="21" height="17" viewBox="0 0 21 17"><defs><linearGradient id="dg" x1="0" y1="0" x2="0" y2="1"><stop offset="0" stop-color="#4d8ad2"/><stop offset="0.5" stop-color="#4b98d9"/><stop offset="1" stop-color="#46a6e3"/></linearGradient></defs><path d="M0.8 9.6 C0.9 7.6 2 6.2 3.6 5.8 H4.4 V3.9 H9 V2 H11.7 V5.8 H14.8 C15.2 5.2 15.6 5 16.1 5 C16.7 5.2 17.1 6 17.3 6.5 L19.9 7.5 C18.7 8.2 17.4 8.5 16.6 8.7 C15 12.6 12.2 15.5 8.7 15.5 C3.8 15.5 0.8 13.2 0.8 9.6 Z" fill="url(#dg)"/><path d="M2.6 13.2 C3.6 14.3 5 14.7 6.6 14.6" stroke="#e6eef6" stroke-width="1" fill="none"/></svg><svg class="fd" width="26" height="24" viewBox="0 0 26 24"><path d="M3.3 4 Q3.3 2.3 5 2.3 H8.6 Q9.3 2.3 9.8 3.1 L11.6 6.3 H22 Q23.6 6.3 23.6 7.9 V19 Q23.6 20.7 22 20.7 H5 Q3.3 20.7 3.3 19 Z M3.3 7.3 H10.6" stroke="#1a76a8" stroke-width="1.6" fill="none" stroke-linejoin="round"/></svg><svg class="cp" width="24" height="27" viewBox="0 0 24 27"><path d="M2.2 22.2 V3.6 Q2.2 2.1 3.6 2.1 H19.3" stroke="#2a8ac3" stroke-width="1.8" fill="none" stroke-linecap="round"/><rect x="6.3" y="5.6" width="15.9" height="19.6" rx="1.4" stroke="#2a8ac3" stroke-width="1.9" fill="none"/></svg><svg class="xc" width="20" height="20" viewBox="0 0 20 20"><circle cx="10" cy="10" r="8" stroke="#d8482c" stroke-width="1.5" fill="none"/><path d="M6.9 6.9 L13.1 13.1 M13.1 6.9 L6.9 13.1" stroke="#d8482c" stroke-width="1.3"/></svg></div>
<div class="t" id="r_art_11" style="left:403.50px;top:1063.17px;font-size:14.5px;font-weight:400;color:#1b7cb4;letter-spacing:0.571px">sha256:0c1d5d8a</div>
<div class="t" id="r_tag_11" style="left:701.30px;top:1063.17px;font-size:14.5px;font-weight:400;color:#666666;letter-spacing:0.742px">4.2.0-alpine(3 )</div>
<div class="t" id="r_size_11" style="left:1003.10px;top:1063.17px;font-size:14.5px;font-weight:400;color:#666666;letter-spacing:0.708px">642.25MiB</div>
<div class="t" id="r_vul_11" style="left:1140.70px;top:1063.17px;font-size:14.5px;font-weight:400;color:#666666;letter-spacing:1.120px">Unsupported</div>
<div class="t" id="r_sbom_11" style="left:1393.50px;top:1063.17px;font-size:14.5px;font-weight:400;color:#666666;letter-spacing:1.300px">Unsupported</div>
<div class="t" id="r_push_11" style="left:1696.90px;top:1054.75px;font-size:14.3px;color:#666666;letter-spacing:0.725px;line-height:15.6px">12/5/25, 7:13<br>PM</div>
<div class="row" style="top:1099.00px"><div class="vsep"></div></div>
<div class="t" id="reg" style="left:68.50px;top:26.46px;font-size:18.4px;font-weight:400;color:#f2f2f2;letter-spacing:1.000px;">Registry</div>
<div class="t" id="srch" style="left:288.10px;top:28.80px;font-size:16.7px;font-weight:400;color:#dedede;letter-spacing:0.080px;">Search</div>
<div class="t" id="user" style="left:1716.50px;top:26.83px;font-size:16.2px;font-weight:400;color:#e0e0e0;letter-spacing:0.692px;">wso2-customer@dregistry.com</div>
<div class="t" id="sproj" style="left:53.50px;top:140.27px;font-size:15.8px;font-weight:400;color:#5c5c5c;letter-spacing:0.643px;">Projects</div>
<div class="t" id="slogs" style="left:53.50px;top:181.57px;font-size:15.8px;font-weight:400;color:#5c5c5c;letter-spacing:0.700px;">Logs</div>
<div class="t" id="sdark" style="left:53.50px;top:1014.86px;font-size:16.4px;font-weight:400;color:#5c5c5c;letter-spacing:-0.467px;">DARK</div>
<div class="t" id="sapi" style="left:53.50px;top:1057.60px;font-size:16.0px;font-weight:400;color:#5c5c5c;letter-spacing:0.700px;">Harbor API V2.0</div>
<div class="t" id="cr1" style="left:319.70px;top:103.44px;font-size:18.3px;font-weight:400;color:#1d7fbf;letter-spacing:0.667px;">&lt; Projects</div>
<div class="t" id="cr2" style="left:419.30px;top:103.44px;font-size:18.3px;font-weight:400;color:#1d7fbf;letter-spacing:0.990px;">&lt; wso2-apim</div>
<div class="t" id="title" style="left:319.70px;top:164.98px;font-size:33.2px;font-weight:400;color:#111111;letter-spacing:0.000px;transform:scaleX(0.97);transform-origin:0 0">am</div>
<div class="t" id="tinfo" style="left:323.50px;top:225.69px;font-size:15.9px;font-weight:400;color:#6a6a6a;letter-spacing:0.933px;">Info</div>
<div class="t" id="tart" style="left:392.10px;top:225.69px;font-size:15.9px;font-weight:400;color:#2f2f2f;letter-spacing:0.812px;">Artifacts</div>
<div class="t" id="bscan" style="left:364.30px;top:301.30px;font-size:14.0px;font-weight:400;color:#bdbdbd;letter-spacing:1.812px;">SCAN VULNERABILITY</div>
<div class="t" id="bgen" style="left:621.70px;top:301.30px;font-size:14.0px;font-weight:400;color:#bdbdbd;letter-spacing:1.650px;">GENERATE SBOM</div>
<div class="t" id="bact" style="left:809.50px;top:302.94px;font-size:13.6px;font-weight:700;color:#1f7db3;letter-spacing:1.733px;">ACTIONS</div>
<div class="t" id="h1" style="left:378.50px;top:364.28px;font-size:13.2px;font-weight:700;color:#5f5f5f;letter-spacing:-0.219px;">Artifacts</div>
<div class="t" id="h2" style="left:701.30px;top:364.28px;font-size:13.2px;font-weight:700;color:#5f5f5f;letter-spacing:0.000px;">Tags</div>
<div class="t" id="h3" style="left:840.90px;top:364.28px;font-size:13.2px;font-weight:700;color:#5f5f5f;letter-spacing:0.000px;">Signed</div>
<div class="t" id="h4" style="left:1002.50px;top:364.28px;font-size:13.2px;font-weight:700;color:#5f5f5f;letter-spacing:0.000px;">Size</div>
<div class="t" id="h5" style="left:1141.70px;top:364.28px;font-size:13.2px;font-weight:700;color:#5f5f5f;letter-spacing:0.221px;">Vulnerabilities</div>
<div class="t" id="h6" style="left:1395.90px;top:364.28px;font-size:13.2px;font-weight:700;color:#5f5f5f;letter-spacing:0.000px;">SBOM</div>
<div class="t" id="h7" style="left:1556.50px;top:364.28px;font-size:13.2px;font-weight:700;color:#5f5f5f;letter-spacing:0.000px;">Labels</div>
<div class="t" id="h8" style="left:1696.50px;top:364.28px;font-size:13.2px;font-weight:700;color:#5f5f5f;letter-spacing:0.000px;">Push Time</div>
<div class="t" id="h9" style="left:1836.50px;top:364.28px;font-size:13.2px;font-weight:700;color:#5f5f5f;letter-spacing:0.000px;">Pull Time</div>
<div id="sb"></div><div id="thumb"></div>
<div id="evt"></div>
<div id="evt-t">EVENT LOG</div>

</body></html>
